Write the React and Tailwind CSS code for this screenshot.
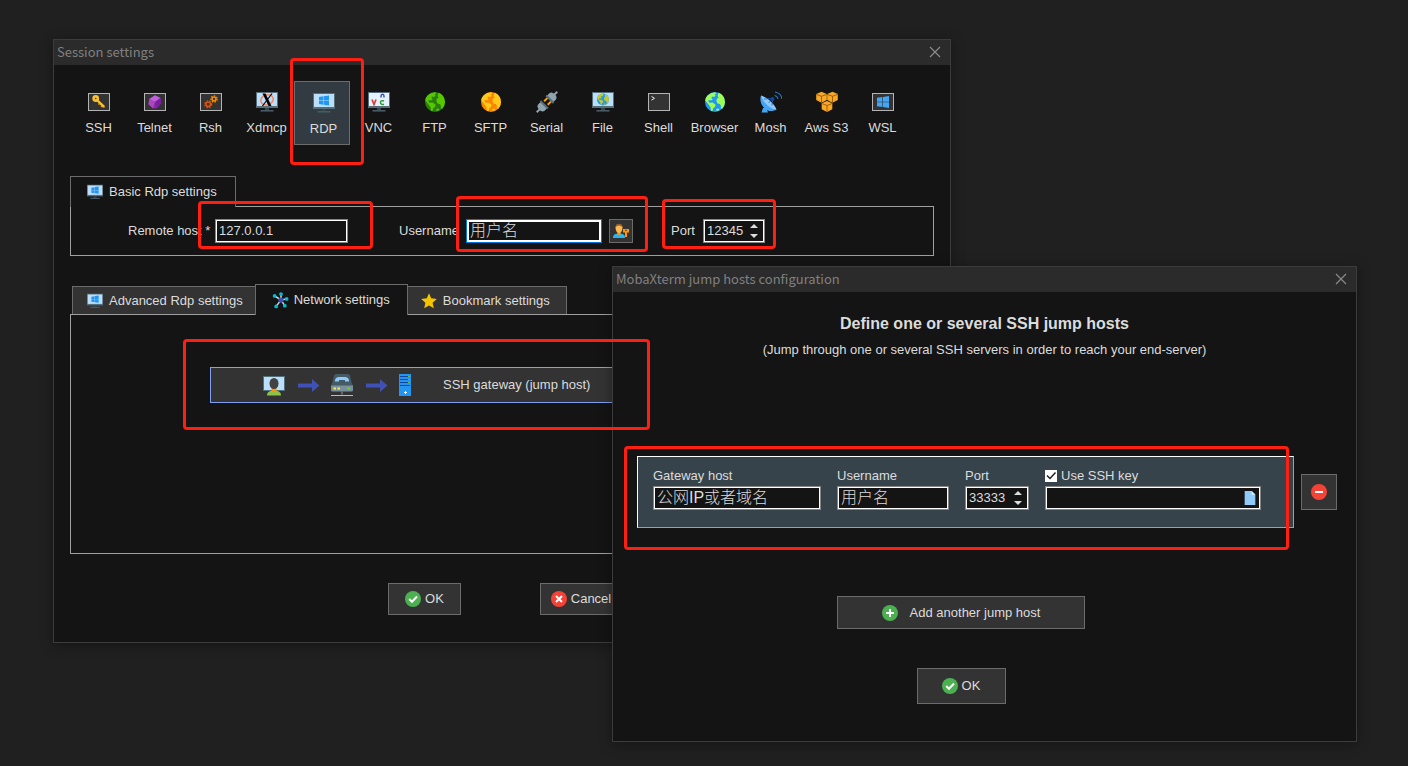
import { FcMindMap, FcFile } from 'react-icons/fc';

function WinLogo({ x, y, s, fill = '#2196f3' }) {
  return (
    <g transform={`translate(${x} ${y}) scale(${s / 12})`} fill={fill}>
      <path d="M0 1.8 5.4 1v4.7H0zM6 .9 12 0v5.7H6zM0 6.3h5.4V11L0 10.2zM6 6.3h6V12l-6-.9z" />
    </g>
  );
}

function Monitor({ children, screen = '#bbdefb', className = 'size-[22px]' }) {
  return (
    <svg viewBox="0 0 22 22" className={className}>
      <rect y="1" width="22" height="16" fill="#546e7a" />
      <rect x="1" y="2" width="20" height="13" fill={screen} />
      <rect x="9" y="17" width="4" height="2" fill="#37474f" />
      <rect x="4.500" y="19" width="13" height="1.600" fill="#455a64" />
      {children}
    </svg>
  );
}

function Framed({ children }) {
  return (
    <svg viewBox="0 0 22 22" className="size-[22px]">
      <rect x=".5" y="2.500" width="21" height="17" fill="#333" stroke="#b4b4b4" />
      {children}
    </svg>
  );
}

function Gear({ cx, cy, r, color }) {
  return (
    <g fill="none" stroke={color}>
      <circle cx={cx} cy={cy} r={r} strokeWidth="1.500" />
      <circle cx={cx} cy={cy} r={r + 1.2} strokeWidth="1.300" strokeDasharray="1.500 1.300" />
    </g>
  );
}

function GlobeShape({ ocean, land }) {
  return (
    <>
      <circle cx="11" cy="11" r="10" fill={ocean} />
      <path
        d="M3.500 4.500Q6.500 1.500 11 1.200l1.500 1-2 1.300 1.200 1-1.700 1.600-2-.6-.7 1.500 1.400 1.200-1 1H5.500L4 9.500l1.500 2.200 3-.2 3 2-.3 2.200-2 1.600-.7 3L7 19.800l-.5-3.500-1.800-2.500L3 11.500l-1.800-2Q1.500 6.500 3.500 4.500z"
        fill={land}
      />
      <path
        d="M14.500 1.700Q18.500 3 20.200 7l.8 4-.8 3.800-2 3-1.500-.6.3-2.400-1.200-1.800-2.300-.4L12.400 10l.5-2.300 1.900-1.200-1.300-1.400.5-1.300z"
        fill={land}
      />
      <path d="m12 18 2.500-.5 1 1.200-2.700 1.600z" fill={land} />
    </>
  );
}

function Globe(props) {
  return (
    <svg viewBox="0 0 22 22" className="size-[22px]">
      <GlobeShape {...props} />
    </svg>
  );
}

const RdpIcon = ({ className }) => (
  <Monitor className={className}>
    <WinLogo x={6} y={3.5} s={10} />
  </Monitor>
);

const icons = {
  SSH: (
    <Framed>
      <g fill="none">
        <circle cx="7.700" cy="7.500" r="2.100" stroke="#fbc02d" strokeWidth="2.600" />
        <path d="m9.500 9.500 6 5.800v1.200" stroke="#fbc02d" strokeWidth="2.400" />
        <path d="m10.500 12.500 1 1M13 14.700l1 1" stroke="#f9a825" strokeWidth="1.500" />
      </g>
    </Framed>
  ),
  Telnet: (
    <Framed>
      <path d="m11 4.300 5.500 2.700.8 5L13 17.200l-4 .3-4.500-4.300.7-5.200z" fill="#8e24aa" />
      <path d="m11 4.300 5.500 2.700-5.500 4-5.800-3z" fill="#c060d8" />
      <path d="m5.200 8 5.800 3-2 6.500-4.500-4.300z" fill="#ab47bc" />
      <path d="m11 11 5.500-4 .8 5L13 17.200z" fill="#7b1fa2" />
    </Framed>
  ),
  Rsh: (
    <Framed>
      <Gear cx={8.2} cy={13.3} r={2.2} color="#e65100" />
      <Gear cx={14} cy={8} r={1.9} color="#fb8c00" />
    </Framed>
  ),
  Xdmcp: (
    <Monitor>
      <ellipse cx="11" cy="8.800" rx="6.300" ry="5" fill="none" stroke="#ef8a65" strokeWidth="1.500" transform="rotate(-18 11 8.800)" />
      <path d="M6.500 2.500h3L15.500 15h-3z" fill="#000" />
      <path d="M16 2.500 6.500 15" stroke="#000" strokeWidth="1.200" />
    </Monitor>
  ),
  RDP: <RdpIcon className="size-[22px]" />,
  VNC: (
    <Monitor screen="#e3f2fd">
      <path d="m4 8.500 2 5 2-5" fill="none" stroke="#e53935" strokeWidth="1.700" />
      <path d="M13 6.500V5q0-1.800 1.500-1.800T16 5v1.500" fill="none" stroke="#3949ab" strokeWidth="1.400" />
      <path d="M16 10q-3.500-1-3.500 1.500T16 13.300" fill="none" stroke="#2e9a34" strokeWidth="1.500" />
    </Monitor>
  ),
  FTP: <Globe ocean="#2a7d0c" land="#56c800" />,
  SFTP: <Globe ocean="#fb8500" land="#ffca18" />,
  Serial: (
    <svg viewBox="0 0 22 22" className="size-[22px]">
      <g transform="rotate(45 11 11)">
        <path d="M11-3.500V2M11 20v5.500" stroke="#90a4ae" strokeWidth="2" />
        <path d="M6.500 7V3.500q0-3.500 4.500-3.500t4.500 3.500V7zM6.500 15v3.500q0 3.500 4.500 3.500t4.500-3.500V15z" fill="#90a4ae" />
        <path d="M5.700 6h10.600v2H5.700zM5.700 14h10.600v2H5.700z" fill="#546e7a" />
        <path d="M7.500 8h2v4.500h-2zM12.500 8h2v4.500h-2z" fill="#ffa000" />
      </g>
    </svg>
  ),
  File: (
    <Monitor>
      <g transform="translate(4.400 1.900) scale(.6)">
        <GlobeShape ocean="#2196f3" land="#c0ca33" />
      </g>
    </Monitor>
  ),
  Shell: (
    <Framed>
      <path d="m3.500 5.500 3 1.800-3 1.800" fill="none" stroke="#eee" strokeWidth="1" />
    </Framed>
  ),
  Browser: <Globe ocean="#2196f3" land="#9cff57" />,
  Mosh: (
    <svg viewBox="0 0 22 22" className="size-[22px]">
      <path d="m3 17-1.500 4.500H8L6.500 17z" fill="#42a5f5" />
      <path d="M1 4.500C-1 10 2 17 8 19.500c3 1 6 .5 8.500-1z" fill="#42a5f5" />
      <path d="M1 4.500C6 6 14 12 16.500 18.500 10 18 3.500 12 1 4.500z" fill="#90caf9" />
      <path d="m8.500 12 4-4M4 8l8.500-.5-.5 7" fill="none" stroke="#1565c0" strokeWidth=".8" />
      <circle cx="12.500" cy="8" r="1.900" fill="#0d47a1" />
      <path d="M14.500 4.500q3 .5 3.500 3.500M15 1q6 1 7 7" fill="none" stroke="#1e78c8" strokeWidth="1.100" />
    </svg>
  ),
  'Aws S3': (
    <svg viewBox="0 0 22 22" className="size-[22px]">
      {[[5.5, 0.8], [16.5, 0.8], [11, 10]].map(([x, y]) => (
        <g key={x} transform={`translate(${x} ${y})`}>
          <path d="m0 0 5.300 2.300v6L0 11l-5.300-2.700v-6z" fill="#f9a825" />
          <path d="m-5.300 2.500 5.300 2 5.300-2M0 4.500V11" fill="none" stroke="#8a4b00" strokeWidth=".8" />
        </g>
      ))}
    </svg>
  ),
  WSL: (
    <Framed>
      <WinLogo x={5} y={5} s={12} fill="#42a5f5" />
    </Framed>
  ),
};

const sessionTypes = ['SSH', 'Telnet', 'Rsh', 'Xdmcp', 'RDP', 'VNC', 'FTP', 'SFTP', 'Serial', 'File', 'Shell', 'Browser', 'Mosh', 'Aws S3', 'WSL'];

function Badge({ color, d }) {
  return (
    <svg viewBox="0 0 16 16" className="size-4 shrink-0">
      <circle cx="8" cy="8" r="8" fill={color} />
      <path d={d} fill="none" stroke="#fff" strokeWidth="2" />
    </svg>
  );
}
const OkIcon = () => <Badge color="#4caf50" d="m4.200 8 2.800 2.800 5-5.300" />;

function UserKeyIcon() {
  return (
    <svg viewBox="0 0 16 16" className="size-4">
      <path d="M0 15c0-3.500 2-4.500 6-4.500s6 1 6 4.500z" fill="#29b6f6" />
      <path d="M4.500 9h3v2.500L6 12.500l-1.500-1z" fill="#ff9800" />
      <path d="M2.500 5Q2.500 1 6 1t3.500 4Q9 10 6 10T2.500 5z" fill="#ffb74d" />
      <path d="M2.500 4Q3 .8 6 .8T9.500 4Q8 2.500 6 2.500T2.500 4z" fill="#8d5a34" />
      <path d="M10 6h6v3.500h-2V14h-2V9.500h-2z" fill="#ff9800" />
      <path d="M12 7.300h2" stroke="#5d4037" />
    </svg>
  );
}

function UserScreenIcon() {
  return (
    <svg viewBox="0 0 22 22" className="size-[22px]">
      <path d="M0 2h22v15H0z" fill="#546e7a" />
      <path d="M1 3h20v13H1z" fill="#bbdefb" />
      <path d="M4 21.500c0-3.500 2.500-5 7-5s7 1.500 7 5z" fill="#8bc34a" />
      <path d="M8.500 14h5v2.500L11 18.500l-2.500-2z" fill="#ff9800" />
      <ellipse cx="11" cy="9.500" rx="4.500" ry="5.500" fill="#424242" />
    </svg>
  );
}

function ArrowIcon() {
  return (
    <svg viewBox="0 0 24 22" className="h-[22px] w-6">
      <path d="M2 9.500h14V5l7.500 6.500L16 18v-4.500H2z" fill="#3f51b5" />
    </svg>
  );
}

function ModemIcon() {
  return (
    <svg viewBox="0 0 22 22" className="size-[22px]">
      <path d="M1.500 8 3 1.500Q3.500 0 5 0h12q1.500 0 2 1.500L20.500 8l1.500 4H0z" fill="#455a64" />
      <path d="M4 7.500V6q1-3 4-3h6q3 0 4 3v1.500h-4V6H8v1.500z" fill="#90caf9" />
      <path d="M0 11.500h22V16q0 1.500-1.500 1.500h-19Q0 17.500 0 16z" fill="#78909c" />
      <path d="M2.500 13.500H5v2H2.500zM6.500 13.500H9v2H6.500z" fill="#ffeb3b" />
      <path d="M16.500 13.500H19v2h-2.500z" fill="#64dd17" />
      <path d="M10.500 17.500h1v3h-1z" fill="#90a4ae" />
      <path d="M0 21h22v1H0z" fill="#b0bec5" />
    </svg>
  );
}

function ServerIcon() {
  return (
    <svg viewBox="0 0 12 22" className="h-[22px] w-3">
      <path d="M0 0h12v22H0z" fill="#2196f3" />
      <path d="M1 2.500h10M1 5.500h10M1 8.500h10M1 11.500h10" stroke="#0d47a1" />
      <path d="M9 2.500h2M9 5.500h2M9 8.500h2" stroke="#76b81f" />
      <path d="M6.500 17v3M5 18.500h3" stroke="#e3f2fd" />
    </svg>
  );
}

function StarIcon() {
  return (
    <svg viewBox="0 0 16 16" className="size-4">
      <path d="m8 .3 2.200 5 5.600.6-4.200 3.800 1.200 5.600L8 12.500l-4.800 2.800 1.200-5.600L.2 5.900l5.600-.6z" fill="#f5c400" />
    </svg>
  );
}

const field = 'h-6 border border-[#858585] bg-[#141414] text-[#dcdcdc] shadow-[inset_0_0_0_1px_#fff] outline-none';
const push = 'flex items-center justify-center border border-[#6b6b6b] bg-[#333333]';

function TextField({ className = '', ...props }) {
  return <input type="text" className={`${field} px-[3px] ${className}`} {...props} />;
}

function PortField({ id, value, className }) {
  return (
    <div className={`${field} flex items-center justify-between pr-[6px] pl-[3px] ${className}`}>
      <input id={id} type="text" inputMode="numeric" defaultValue={value} className="w-10 min-w-0 bg-transparent pb-px outline-none" />
      <span className="flex flex-col gap-[6px]">
        <button type="button" aria-label="Increase port" className="block">
          <svg viewBox="0 0 8 4" className="block h-1 w-2"><path d="M0 4 4 0l4 4z" fill="#dcdcdc" /></svg>
        </button>
        <button type="button" aria-label="Decrease port" className="block">
          <svg viewBox="0 0 8 4" className="block h-1 w-2"><path d="m0 0 4 4 4-4z" fill="#dcdcdc" /></svg>
        </button>
      </span>
    </div>
  );
}

function DialogWindow({ title, className, children }) {
  return (
    <section aria-label={title} className={`absolute border border-[#3c3c3c] bg-[#141414] shadow-[0_2px_12px_rgba(0,0,0,0.35)] ${className}`}>
      <header className="flex h-[25px] items-center justify-between bg-[#2b2b2b] pr-[9px] pb-px pl-[3px] text-[#808080]">
        <h1 className="font-['Noto_Sans_CJK_SC',sans-serif] text-[13px] leading-5">{title}</h1>
        <button type="button" aria-label="Close">
          <svg viewBox="0 0 12 12" className="size-3"><path d="m1 1 10 10M11 1 1 11" stroke="#8a8a8a" strokeWidth="1.200" /></svg>
        </button>
      </header>
      {children}
    </section>
  );
}

function SessionWindow() {
  return (
    <DialogWindow title="Session settings" className="top-[39px] left-[53px] w-[898px]">
      <div className="px-4 pt-4 pb-[27px]">
        <nav className="flex">
          {sessionTypes.map((name) => (
            <button
              key={name}
              type="button"
              className={`flex h-16 w-14 shrink-0 flex-col items-center gap-[5px] border whitespace-nowrap ${
                name === 'RDP' ? 'border-[#6b6b6b] bg-[#333b42] pt-[10px] pl-1' : 'border-transparent pt-[9px] pl-[2px]'
              }`}
            >
              {icons[name]}
              <span className="pr-px">{name}</span>
            </button>
          ))}
        </nav>

        <div className="mt-[31px] flex">
          <button type="button" className="relative z-10 -mb-px flex h-[31px] items-center gap-[6px] border border-b-0 border-[#6b6b6b] bg-[#141414] pr-[18px] pb-px pl-4">
            <RdpIcon className="size-4" />
            Basic Rdp settings
          </button>
        </div>
        <div className="flex items-start border border-[#a0a0a0] pt-3 pb-3 pl-14">
          <label htmlFor="remote" className="w-[88px] shrink-0 pl-px leading-6 whitespace-nowrap">Remote host *</label>
          <TextField id="remote" defaultValue="127.0.0.1" className="w-[133px] pb-px" />
          <label htmlFor="user" className="ml-[51px] w-[67px] shrink-0 leading-6">Username</label>
          <input
            id="user"
            type="text"
            defaultValue="用户名"
            className="h-6 w-[136px] border border-[#0078d7] bg-[#141414] px-[3px] pb-1 text-[16px] font-light shadow-[inset_0_0_0_2px_#fff] outline-none"
          />
          <button type="button" aria-label="Saved credentials" className={`${push} ml-[7px] size-6`}><UserKeyIcon /></button>
          <label htmlFor="port" className="ml-[38px] w-8 shrink-0 leading-6">Port</label>
          <PortField id="port" value="12345" className="w-[62px]" />
        </div>

        <div className="mt-7 flex items-end pl-[2px]">
          <button type="button" className="flex h-7 items-center gap-[6px] border border-b-0 border-[#6b6b6b] bg-[#333333] pr-3 pl-[14px]">
            <RdpIcon className="size-4" />
            Advanced Rdp settings
          </button>
          <button type="button" className="relative z-10 -mx-px -mb-px flex h-[31px] items-center gap-1 border border-b-0 border-[#6b6b6b] bg-[#141414] pr-[17px] pb-px pl-4">
            <FcMindMap className="size-[18px]" />
            Network settings
          </button>
          <button type="button" className="flex h-7 items-center gap-[6px] border border-b-0 border-[#6b6b6b] bg-[#333333] pr-4 pl-[13px]">
            <StarIcon />
            Bookmark settings
          </button>
        </div>
        <div className="flex justify-center border border-[#a0a0a0] pt-[52px] pb-[150px]">
          <button type="button" className="flex h-9 w-[584px] items-center border border-[#82a0f0] bg-[#333333] pl-[52px]">
            <span className="flex items-center gap-[11px]">
              <UserScreenIcon />
              <ArrowIcon />
              <ModemIcon />
              <ArrowIcon />
              <ServerIcon />
            </span>
            <span className="ml-8">SSH gateway (jump host)</span>
          </button>
        </div>

        <div className="mt-[29px] flex justify-center gap-[79px] pl-[6px]">
          <button type="button" className={`${push} h-8 w-[73px] gap-1`}><OkIcon />OK</button>
          <button type="button" className={`${push} h-8 w-[82px] gap-1`}>
            <Badge color="#f44336" d="m5 5 6 6M11 5l-6 6" />Cancel
          </button>
        </div>
      </div>
    </DialogWindow>
  );
}

function JumpHostsWindow() {
  return (
    <DialogWindow title="MobaXterm jump hosts configuration" className="top-[266px] left-[612px] w-[745px]">
      <div className="pt-5 pb-[37px]">
        <h2 className="text-center text-[16px] leading-6 font-bold">Define one or several SSH jump hosts</h2>
        <p className="mt-1 text-center leading-5">(Jump through one or several SSH servers in order to reach your end-server)</p>

        <div className="mt-24 flex items-center gap-[7px] pr-[19px] pl-6">
          <div className="flex flex-1 gap-4 border border-t-white border-r-[#a0a0a0] border-b-[#a0a0a0] border-l-white bg-[#36434b] pt-[9px] pb-[17px] pl-[15px]">
            <div className="flex w-[168px] flex-col">
              <label htmlFor="gw" className="leading-5">Gateway host</label>
              <TextField id="gw" defaultValue="公网IP或者域名" className="pb-1 text-[16px] font-light" />
            </div>
            <div className="flex w-28 flex-col">
              <label htmlFor="gwuser" className="leading-5">Username</label>
              <TextField id="gwuser" defaultValue="用户名" className="pb-1 text-[16px] font-light" />
            </div>
            <div className="flex w-16 flex-col">
              <label htmlFor="gwport" className="leading-5">Port</label>
              <PortField id="gwport" value="33333" className="w-16" />
            </div>
            <div className="flex w-[216px] flex-col">
              <label className="flex items-center gap-1 leading-5">
                <input type="checkbox" defaultChecked className="peer size-3 appearance-none bg-white" />
                <svg viewBox="0 0 12 12" className="pointer-events-none -ml-4 size-3 opacity-0 peer-checked:opacity-100">
                  <path d="m2 5.500 3 3 5.500-6" fill="none" stroke="#222" strokeWidth="1.500" />
                </svg>
                Use SSH key
              </label>
              <div className={`${field} flex items-center pr-[2px]`}>
                <input type="text" aria-label="SSH key file" className="min-w-0 flex-1 bg-transparent pl-1 outline-none" />
                <button type="button" aria-label="Browse for key"><FcFile className="size-4" /></button>
              </div>
            </div>
          </div>
          <button type="button" aria-label="Remove jump host" className={`${push} size-9`}>
            <Badge color="#f44336" d="M4 8h8" />
          </button>
        </div>

        <div className="mt-[68px] flex flex-col items-center gap-[39px] pr-[47px]">
          <button type="button" className={`${push} h-[33px] w-[248px] gap-3`}><Badge color="#4caf50" d="M4 8h8M8 4v8" />Add another jump host</button>
          <button type="button" className={`${push} h-9 w-[89px] gap-1`}><OkIcon />OK</button>
        </div>
      </div>
    </DialogWindow>
  );
}

const highlights = [
  'top-[58px] left-[290px] h-[107px] w-[74px]',
  'top-[201px] left-[198px] h-[48px] w-[175px]',
  'top-[196px] left-[456px] h-[56px] w-[192px]',
  'top-[199px] left-[662px] h-[50px] w-[114px]',
  'top-[339px] left-[183px] h-[91px] w-[467px]',
  'top-[446px] left-[624px] h-[104px] w-[665px]',
];

export default function App() {
  return (
    <main className="relative min-h-screen overflow-hidden bg-[#202020] font-['Liberation_Sans','Noto_Sans_CJK_SC',sans-serif] text-[13px] leading-5 text-[#dcdcdc]">
      <SessionWindow />
      <JumpHostsWindow />
      {highlights.map((place) => (
        <div key={place} className={`pointer-events-none absolute z-20 rounded-[4px] border-[3px] border-[#ff1e12] ${place}`} />
      ))}
    </main>
  );
}
